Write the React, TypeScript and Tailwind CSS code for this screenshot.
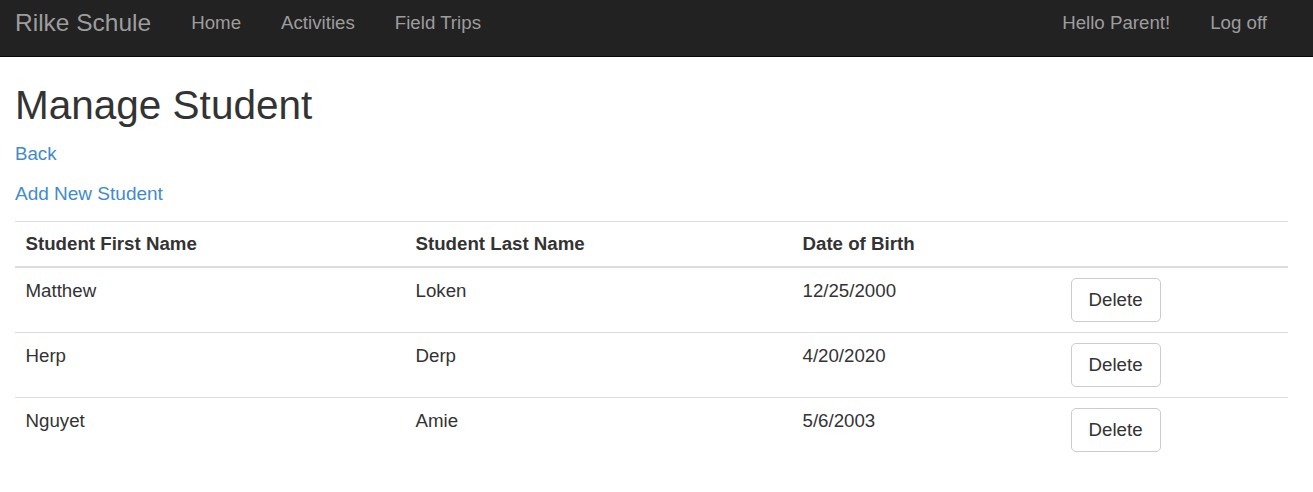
import React from "react";

const students = [
  { first: "Matthew", last: "Loken", dob: "12/25/2000" },
  { first: "Herp", last: "Derp", dob: "4/20/2020" },
  { first: "Nguyet", last: "Amie", dob: "5/6/2003" },
];

export default function App() {
  return (
    <div
      className="min-h-[492px] bg-white text-[#333] text-[18.7px] leading-[26.5px]"
      style={{ fontFamily: '"Liberation Sans", Arial, Helvetica, sans-serif' }}
    >
      <nav className="h-[57px] bg-[#222] border-b border-[#080808] flex items-start justify-between pl-[15px] pr-[26px]">
        <div className="flex items-start">
          <a className="text-[24.5px] leading-[30px] text-[#9d9d9d] pt-[8px] pr-[20px]">Rilke Schule</a>
          <a className="px-[20px] pt-[10px] text-[#9d9d9d]">Home</a>
          <a className="px-[20px] pt-[10px] text-[#9d9d9d]">Activities</a>
          <a className="px-[20px] pt-[10px] text-[#9d9d9d]">Field Trips</a>
        </div>
        <div className="flex items-start">
          <a className="px-[20px] pt-[10px] text-[#9d9d9d]">Hello Parent!</a>
          <a className="px-[20px] pt-[10px] text-[#9d9d9d]">Log off</a>
        </div>
      </nav>

      <div className="pl-[15px] pr-[25px]">
        <h2 className="text-[40.5px] leading-[45px] font-normal mt-[26px] mb-[13px] text-[#333]">Manage Student</h2>
        <p className="mb-[13px]">
          <a className="text-[#428bca]">Back</a>
        </p>
        <p className="mb-[13.5px]">
          <a className="text-[#428bca] text-[19px]">Add New Student</a>
        </p>

        <table className="w-full table-fixed border-collapse">
          <colgroup>
            <col className="w-[390px]" />
            <col className="w-[387px]" />
            <col className="w-[268px]" />
            <col />
          </colgroup>
          <thead>
            <tr className="border-t border-[#ddd] border-b-2">
              <th className="text-left font-bold px-[10.5px] pt-[9px] pb-[9px] align-bottom">Student First Name</th>
              <th className="text-left font-bold px-[10.5px] pt-[9px] pb-[9px] align-bottom">Student Last Name</th>
              <th className="text-left font-bold px-[10.5px] pt-[9px] pb-[9px] align-bottom">Date of Birth</th>
              <th className="px-[10.5px]"></th>
            </tr>
          </thead>
          <tbody>
            {students.map((s, i) => (
              <tr key={i} className={i === 0 ? "" : "border-t border-[#ddd]"}>
                <td className="px-[10.5px] pt-[10px] pb-[10px] align-top">{s.first}</td>
                <td className="px-[10.5px] pt-[10px] pb-[10px] align-top">{s.last}</td>
                <td className="px-[10.5px] pt-[10px] pb-[10px] align-top">{s.dob}</td>
                <td className="px-[10.5px] pt-[10px] pb-[10px] align-top">
                  <button className="h-[44px] px-[17px] bg-white border border-[#ccc] rounded-[5px] text-[#333] leading-[26.5px]">
                    Delete
                  </button>
                </td>
              </tr>
            ))}
          </tbody>
        </table>
      </div>
    </div>
  );
}
